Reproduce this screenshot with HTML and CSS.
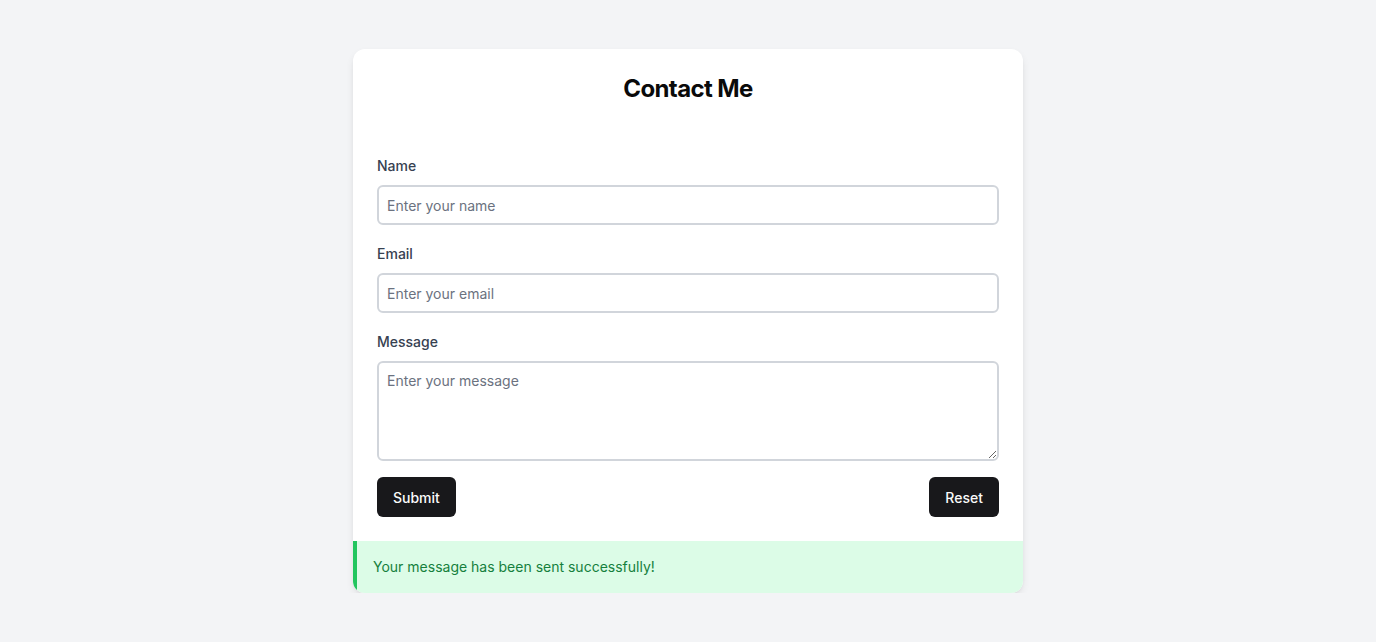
FILE: index.html
```html
<!DOCTYPE html>
<html lang="en">
<head>
<meta charset="utf-8">
<title>Contact Me</title>
<link rel="stylesheet" href="styles.css">
</head>
<body>
<main class="card">
  <div class="card-body">
    <h1 class="title">Contact Me</h1>
    <form class="form">
      <div class="field">
        <label class="label" for="name">Name</label>
        <input class="input" id="name" type="text" placeholder="Enter your name">
      </div>
      <div class="field">
        <label class="label" for="email">Email</label>
        <input class="input" id="email" type="email" placeholder="Enter your email">
      </div>
      <div class="field field-last">
        <label class="label" for="message">Message</label>
        <textarea class="input textarea" id="message" rows="4" placeholder="Enter your message"></textarea>
      </div>
      <div class="actions">
        <button class="btn" type="button">Submit</button>
        <button class="btn" type="button">Reset</button>
      </div>
    </form>
  </div>
  <div class="alert">Your message has been sent successfully!</div>
</main>
</body>
</html>
```
FILE: styles.css
```css
* { box-sizing: border-box; }
html, body { margin: 0; padding: 0; }
body {
  background: #f3f4f6;
  font-family: Inter, "Noto Sans", sans-serif;
  color: #111827;
  padding-top: 49px;
}
.card {
  width: 670px;
  margin: 0 auto;
  background: #fff;
  border-radius: 12px;
  overflow: hidden;
  box-shadow: 0 4px 10px -2px rgba(0,0,0,0.12), 0 2px 4px -2px rgba(0,0,0,0.08);
}
.card-body { padding: 24px; }
.title {
  margin: 0 0 51px;
  font-size: 24px;
  line-height: 32px;
  font-weight: 700;
  text-align: center;
  color: #0a0a0a;
  letter-spacing: -0.6px;
}
.form { display: flex; flex-direction: column; }
.field { display: flex; flex-direction: column; margin-bottom: 19px; }
.field-last { margin-bottom: 16px; }
.label {
  font-size: 14px;
  line-height: 20px;
  font-weight: 500;
  color: #374151;
  margin-bottom: 9px;
}
.input {
  display: block;
  width: 100%;
  height: 40px;
  border: 2px solid #d1d5db;
  border-radius: 6px;
  padding: 8px;
  font-family: Inter, "Noto Sans", sans-serif;
  font-size: 14px;
  line-height: 20px;
  color: #111827;
  background: #fff;
  outline: none;
}
.input::placeholder { color: #6b7280; }
.textarea { height: 100px; resize: vertical; }
.actions { display: flex; justify-content: space-between; }
.btn {
  height: 40px;
  padding: 0 16px;
  border: none;
  border-radius: 6px;
  background: #18181b;
  color: #fafafa;
  font-family: Inter, "Noto Sans", sans-serif;
  font-size: 14px;
  font-weight: 500;
  cursor: pointer;
}
.alert {
  background: #dcfce7;
  border-left: 4px solid #22c55e;
  color: #15803d;
  font-size: 14px;
  line-height: 20px;
  padding: 16px;
}
```
